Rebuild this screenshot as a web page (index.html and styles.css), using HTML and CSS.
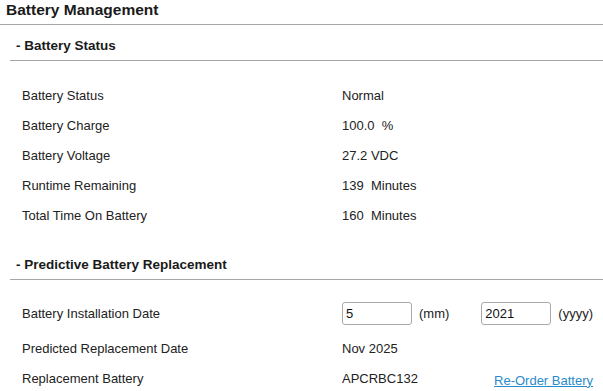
FILE: index.html
```html
<!DOCTYPE html>
<html>
<head>
<meta charset="utf-8">
<link rel="stylesheet" href="styles.css">
</head>
<body>
<div class="page">
  <h1 class="title">Battery Management</h1>
  <section class="section">
    <h2 class="sec-head">- Battery Status</h2>
    <div class="rows rows-status">
      <div class="row"><span class="label">Battery Status</span><span class="value">Normal</span></div>
      <div class="row"><span class="label">Battery Charge</span><span class="value">100.0&nbsp;&nbsp;%</span></div>
      <div class="row"><span class="label">Battery Voltage</span><span class="value">27.2 VDC</span></div>
      <div class="row"><span class="label">Runtime Remaining</span><span class="value">139&nbsp;&nbsp;Minutes</span></div>
      <div class="row"><span class="label">Total Time On Battery</span><span class="value">160&nbsp;&nbsp;Minutes</span></div>
    </div>
  </section>
  <section class="section">
    <h2 class="sec-head">- Predictive Battery Replacement</h2>
    <div class="rows rows-pred">
      <div class="row row-input">
        <span class="label">Battery Installation Date</span>
        <span class="value value-inputs">
          <input class="field" type="text" value="5"><span class="unit">(mm)</span>
          <input class="field field-year" type="text" value="2021"><span class="unit">(yyyy)</span>
        </span>
      </div>
      <div class="row"><span class="label">Predicted Replacement Date</span><span class="value">Nov 2025</span></div>
      <div class="row"><span class="label">Replacement Battery</span><span class="value">APCRBC132</span><a class="link" href="#">Re-Order Battery</a></div>
    </div>
  </section>
</div>
</body>
</html>
```
FILE: styles.css
```css
html, body {
  margin: 0;
  padding: 0;
  background: #ffffff;
}
body {
  font-family: "Liberation Sans", Arial, sans-serif;
  color: #222222;
  font-size: 13px;
}
.page {
  width: 603px;
}
.title {
  margin: 0;
  font-size: 15.5px;
  font-weight: bold;
  color: #1a1a1a;
  line-height: 20px;
  padding: 0 0 4px 6px;
  height: 20px;
  border-bottom: 1px solid #a6a6a6;
}
.section {
  margin-left: 10px;
}
.sec-head {
  margin: 0;
  font-size: 13.5px;
  font-weight: bold;
  color: #1a1a1a;
  line-height: 20px;
  padding: 11px 0 4px 6px;
  border-bottom: 1px solid #a6a6a6;
}
.rows {
  display: flex;
  flex-direction: column;
  padding-right: 10px;
}
.rows-status {
  padding-top: 19px;
  padding-bottom: 14px;
}
.rows-pred {
  padding-top: 18px;
}
.row {
  display: flex;
  align-items: center;
  height: 30px;
  padding-left: 12px;
}
.row-input {
  margin-bottom: 5px;
}
.label {
  width: 320px;
  flex: none;
}
.value {
  flex: none;
}
.value-inputs {
  display: flex;
  align-items: center;
}
.field {
  box-sizing: border-box;
  width: 70px;
  height: 23px;
  border: 1px solid #a9a9a9;
  border-radius: 3px;
  padding: 0 3px;
  margin: 0;
  font-family: "Liberation Sans", Arial, sans-serif;
  font-size: 13px;
  color: #111111;
  background: #ffffff;
}
.field-year {
  margin-left: 32px;
}
.unit {
  margin-left: 7px;
}
.link {
  margin-left: auto;
  font-size: 13px;
  color: #2a8bcb;
  text-decoration: underline;
  padding-top: 4px;
}
```
